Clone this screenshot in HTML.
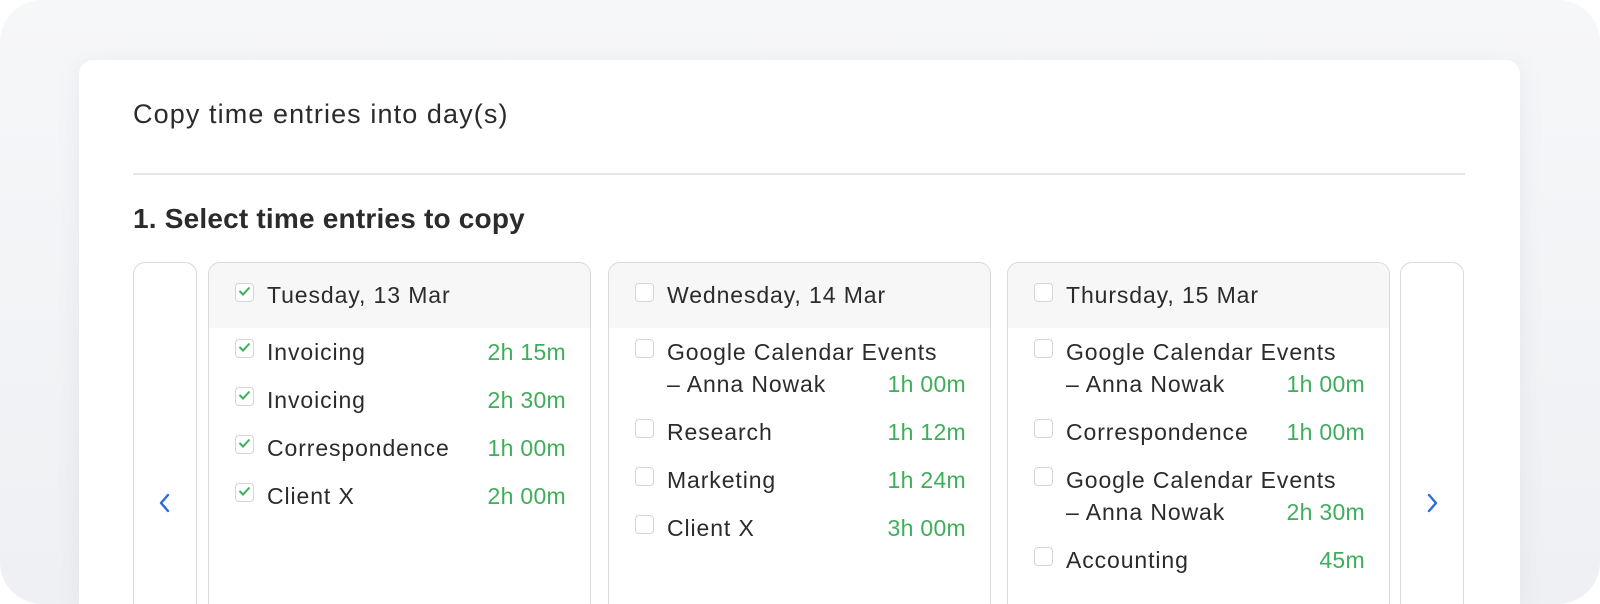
<!DOCTYPE html>
<html><head><meta charset="utf-8"><style>
*{box-sizing:border-box;margin:0;padding:0}
html,body{width:1600px;height:604px;overflow:hidden;background:#fff;font-family:"Liberation Sans",sans-serif;color:#2b2b2b}
#w{position:relative;width:1600px;height:604px;overflow:hidden}
.outer{position:absolute;left:0;top:0;width:1600px;height:604px;border-radius:42px;background:linear-gradient(180deg,#f6f7f9,#eef0f3);}
.card{position:absolute;left:79px;top:60px;width:1441px;height:544px;background:#fff;border-radius:14px 14px 0 0;box-shadow:0 4px 30px rgba(30,40,60,.06)}
.title{position:absolute;left:133px;top:99px;font-size:27px;letter-spacing:1.1px;color:#2b2b2b}
.hr{position:absolute;left:133px;top:173px;width:1332px;height:2px;background:#e6e6e6}
.h{position:absolute;left:133px;top:203px;font-size:28px;font-weight:bold;letter-spacing:0.2px;color:#2b2b2b}
.nav{position:absolute;top:262px;height:342px;width:64px;border:1.5px solid #d9d9d9;border-bottom:none;border-radius:12px 12px 0 0;background:#fff}
.nav svg{position:absolute;left:22px;top:228px}
.col{position:absolute;top:262px;width:383px;height:342px;border:1.5px solid #d9d9d9;border-bottom:none;border-radius:12px 12px 0 0;overflow:hidden;background:#fff}
.hd{height:65px;background:#f7f7f7;position:relative}
.cb{position:absolute;left:26px;width:19px;height:19px;border:1.5px solid #d5d5d5;border-radius:4px;background:#fff}
.cb svg{position:absolute;left:1px;top:0}
.t{position:absolute;left:58px;font-size:23px;letter-spacing:0.9px;color:#2b2b2b;white-space:nowrap}
.d{position:absolute;right:24px;font-size:23px;letter-spacing:0.3px;color:#3fae5b}
</style></head><body><div id="w">
<div class="outer"></div>
<div class="card"></div>
<div class="title">Copy time entries into day(s)</div>
<div class="hr"></div>
<div class="h">1. Select time entries to copy</div>

<div class="nav" style="left:133px"><svg width="18" height="24" viewBox="0 0 18 24"><path d="M12 4 L5 12 L12 20" fill="none" stroke="#2a6de0" stroke-width="2.4" stroke-linecap="round" stroke-linejoin="round"/></svg></div>
<div class="nav" style="left:1400px"><svg width="18" height="24" viewBox="0 0 18 24"><path d="M6 4 L13 12 L6 20" fill="none" stroke="#2a6de0" stroke-width="2.4" stroke-linecap="round" stroke-linejoin="round"/></svg></div>

<div class="col" style="left:208px">
 <div class="hd"><div class="cb" style="top:20px"><svg width="15" height="15" viewBox="0 0 15 15"><path d="M2.5 7 L6 10.5 L12.5 3.5" fill="none" stroke="#3fae5b" stroke-width="2"/></svg></div><div class="t" style="top:19px">Tuesday, 13 Mar</div></div>
 <div class="cb" style="top:76px"><svg width="15" height="15" viewBox="0 0 15 15"><path d="M2.5 7 L6 10.5 L12.5 3.5" fill="none" stroke="#3fae5b" stroke-width="2"/></svg></div><div class="t" style="top:76px">Invoicing</div><div class="d" style="top:76px">2h 15m</div>
 <div class="cb" style="top:124px"><svg width="15" height="15" viewBox="0 0 15 15"><path d="M2.5 7 L6 10.5 L12.5 3.5" fill="none" stroke="#3fae5b" stroke-width="2"/></svg></div><div class="t" style="top:124px">Invoicing</div><div class="d" style="top:124px">2h 30m</div>
 <div class="cb" style="top:172px"><svg width="15" height="15" viewBox="0 0 15 15"><path d="M2.5 7 L6 10.5 L12.5 3.5" fill="none" stroke="#3fae5b" stroke-width="2"/></svg></div><div class="t" style="top:172px">Correspondence</div><div class="d" style="top:172px">1h 00m</div>
 <div class="cb" style="top:220px"><svg width="15" height="15" viewBox="0 0 15 15"><path d="M2.5 7 L6 10.5 L12.5 3.5" fill="none" stroke="#3fae5b" stroke-width="2"/></svg></div><div class="t" style="top:220px">Client X</div><div class="d" style="top:220px">2h 00m</div>
</div>

<div class="col" style="left:608px">
 <div class="hd"><div class="cb" style="top:20px"></div><div class="t" style="top:19px">Wednesday, 14 Mar</div></div>
 <div class="cb" style="top:76px"></div><div class="t" style="top:76px">Google Calendar Events</div>
 <div class="t" style="top:108px">– Anna Nowak</div><div class="d" style="top:108px">1h 00m</div>
 <div class="cb" style="top:156px"></div><div class="t" style="top:156px">Research</div><div class="d" style="top:156px">1h 12m</div>
 <div class="cb" style="top:204px"></div><div class="t" style="top:204px">Marketing</div><div class="d" style="top:204px">1h 24m</div>
 <div class="cb" style="top:252px"></div><div class="t" style="top:252px">Client X</div><div class="d" style="top:252px">3h 00m</div>
</div>

<div class="col" style="left:1007px">
 <div class="hd"><div class="cb" style="top:20px"></div><div class="t" style="top:19px">Thursday, 15 Mar</div></div>
 <div class="cb" style="top:76px"></div><div class="t" style="top:76px">Google Calendar Events</div>
 <div class="t" style="top:108px">– Anna Nowak</div><div class="d" style="top:108px">1h 00m</div>
 <div class="cb" style="top:156px"></div><div class="t" style="top:156px">Correspondence</div><div class="d" style="top:156px">1h 00m</div>
 <div class="cb" style="top:204px"></div><div class="t" style="top:204px">Google Calendar Events</div>
 <div class="t" style="top:236px">– Anna Nowak</div><div class="d" style="top:236px">2h 30m</div>
 <div class="cb" style="top:284px"></div><div class="t" style="top:284px">Accounting</div><div class="d" style="top:284px">45m</div>
</div>
</div></body></html>
